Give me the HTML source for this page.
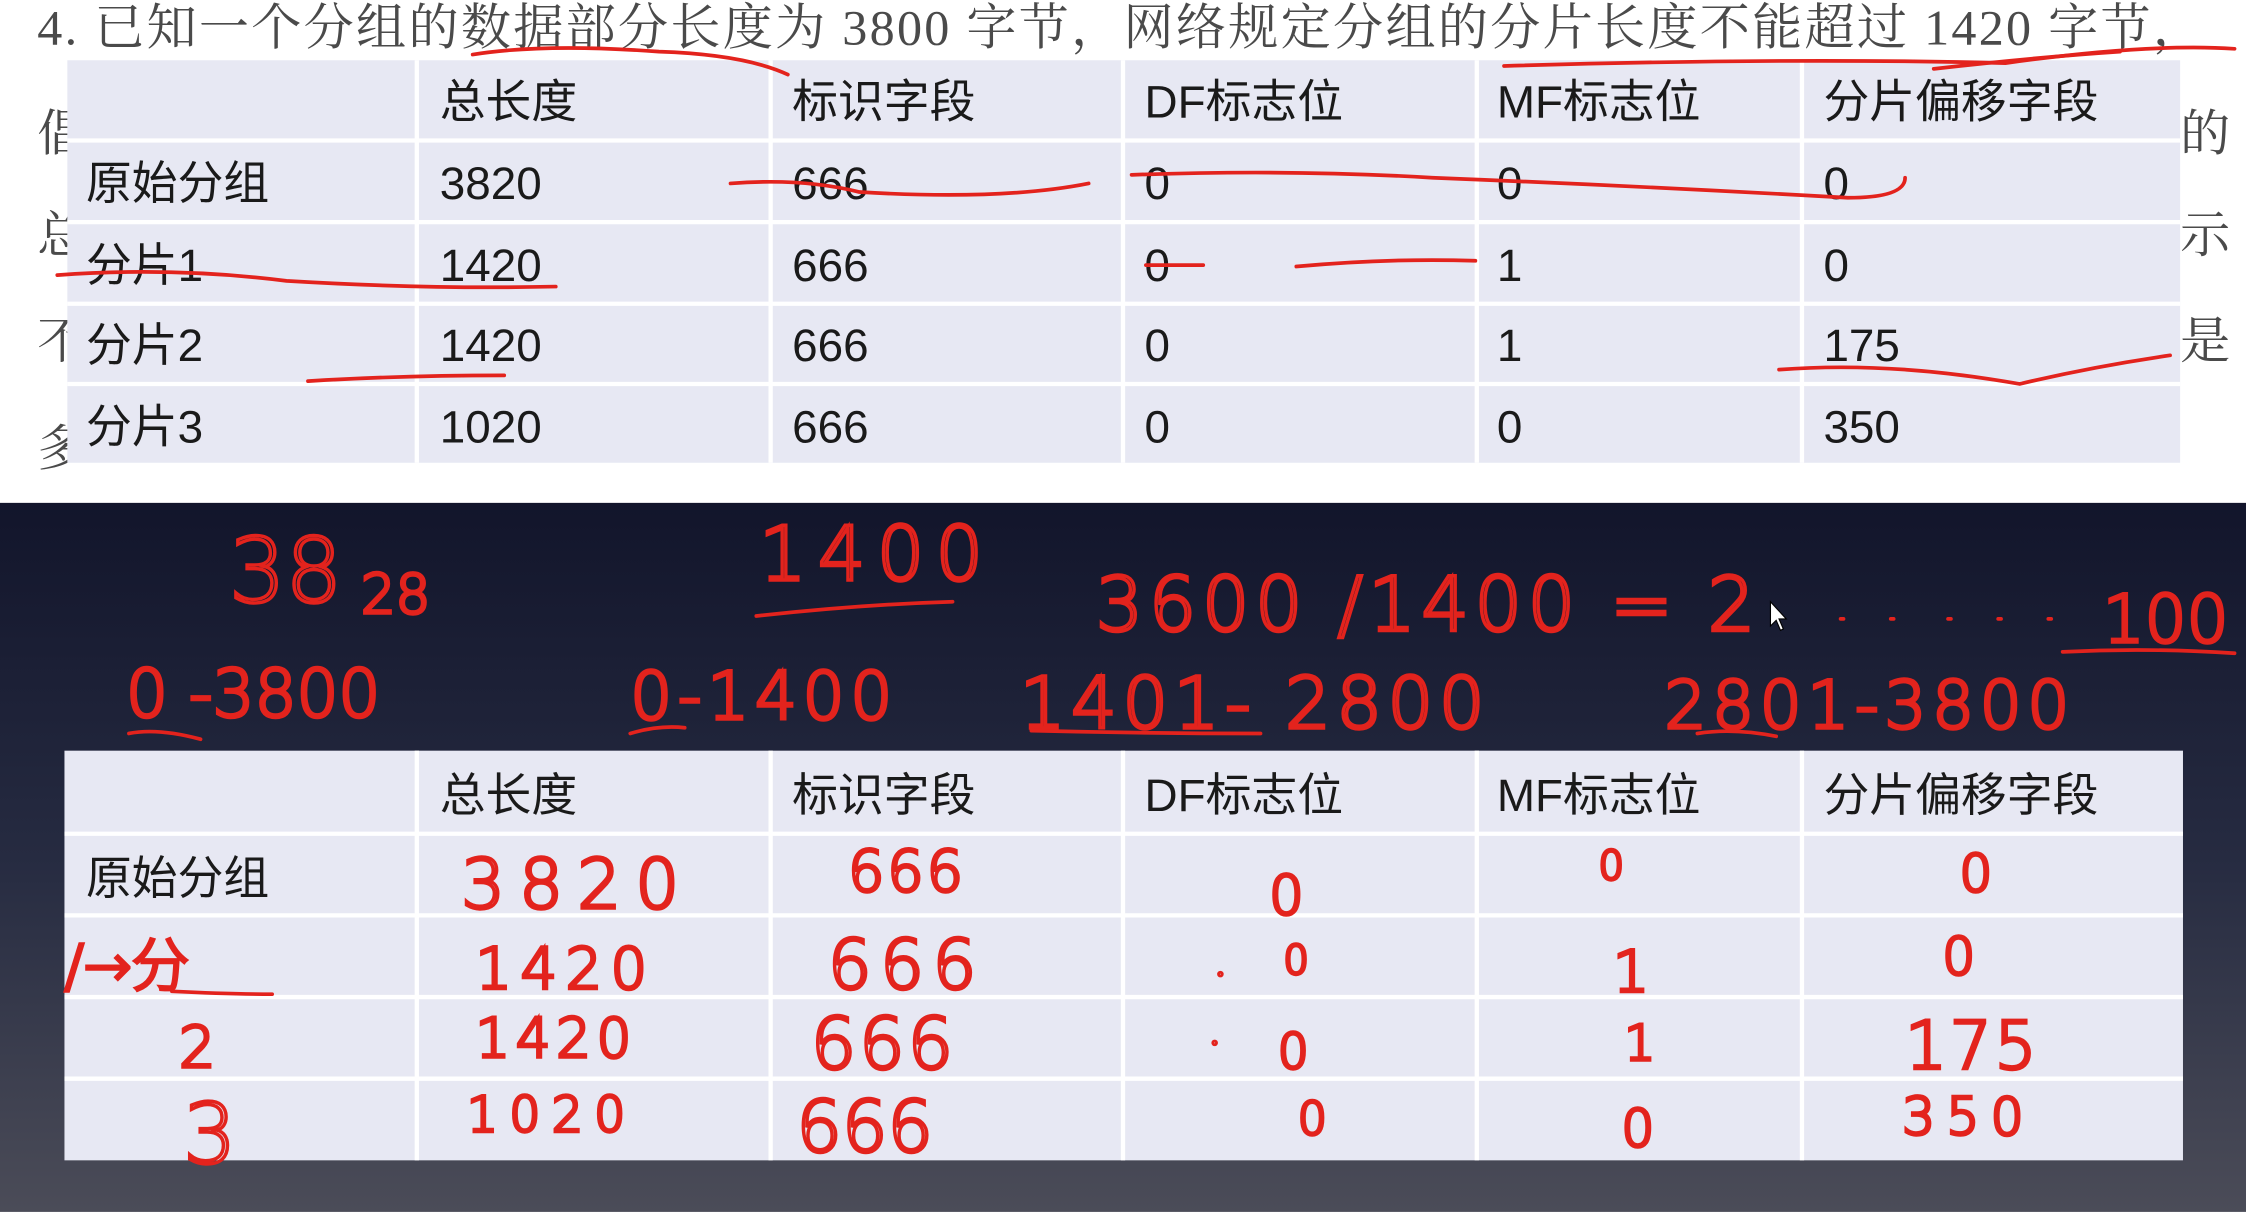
<!DOCTYPE html>
<html><head><meta charset="utf-8"><style>
html,body{margin:0;padding:0;width:2246px;height:1212px;overflow:hidden;background:#fff}
svg{display:block}
.t{font-family:"Liberation Sans","Noto Sans CJK SC",sans-serif;font-size:32px;fill:#1a1a1a}
.q{font-family:"Liberation Serif","Noto Serif CJK SC",serif;font-size:35px;fill:#4a4a4a}
.h{font-family:"DejaVu Sans","Noto Sans CJK SC",sans-serif;fill:none;stroke:#e3231d;stroke-width:2.4;font-weight:200}
.r{fill:none;stroke:#e3231d;stroke-width:2.6;stroke-linecap:round}
</style></head><body>
<svg width="2246" height="1212" viewBox="0 0 1568 846" xmlns="http://www.w3.org/2000/svg">
<defs><linearGradient id="g" x1="0" y1="0" x2="0" y2="1"><stop offset="0" stop-color="#12152b"/><stop offset="0.5" stop-color="#262b41"/><stop offset="1" stop-color="#4b4c58"/></linearGradient></defs>
<rect x="0" y="0" width="1568" height="351" fill="#fff"/>
<rect x="0" y="351" width="1568" height="495" fill="url(#g)"/>
<text class="q" x="26" y="31" textLength="1512" lengthAdjust="spacing">4. 已知一个分组的数据部分长度为 3800 字节，网络规定分组的分片长度不能超过 1420 字节，</text>
<text class="q" x="26" y="105" font-size="30">倡</text><text class="q" x="26" y="176" font-size="30">总</text><text class="q" x="26" y="250" font-size="30">不</text><text class="q" x="26" y="325" font-size="30">多</text>
<text class="q" x="1522" y="105" font-size="30">的</text><text class="q" x="1522" y="176" font-size="30">示</text><text class="q" x="1522" y="250" font-size="30">是</text>
<!-- table 1 -->
<rect x="47" y="42" width="1475" height="281" fill="#e7e8f3"/>
<g stroke="#fff" stroke-width="3">
<line x1="291" y1="42" x2="291" y2="323"/><line x1="538" y1="42" x2="538" y2="323"/><line x1="784" y1="42" x2="784" y2="323"/><line x1="1031" y1="42" x2="1031" y2="323"/><line x1="1258" y1="42" x2="1258" y2="323"/>
<line x1="47" y1="98" x2="1522" y2="98"/><line x1="47" y1="155" x2="1522" y2="155"/><line x1="47" y1="212" x2="1522" y2="212"/><line x1="47" y1="268" x2="1522" y2="268"/>
</g>
<g class="t">
<text x="307" y="82">总长度</text><text x="553" y="82">标识字段</text><text x="799" y="82">DF标志位</text><text x="1045" y="82">MF标志位</text><text x="1273" y="82">分片偏移字段</text>
<text x="60" y="139">原始分组</text><text x="307" y="139">3820</text><text x="553" y="139">666</text><text x="799" y="139">0</text><text x="1045" y="139">0</text><text x="1273" y="139">0</text>
<text x="60" y="196">分片1</text><text x="307" y="196">1420</text><text x="553" y="196">666</text><text x="799" y="196">0</text><text x="1045" y="196">1</text><text x="1273" y="196">0</text>
<text x="60" y="252">分片2</text><text x="307" y="252">1420</text><text x="553" y="252">666</text><text x="799" y="252">0</text><text x="1045" y="252">1</text><text x="1273" y="252">175</text>
<text x="60" y="309">分片3</text><text x="307" y="309">1020</text><text x="553" y="309">666</text><text x="799" y="309">0</text><text x="1045" y="309">0</text><text x="1273" y="309">350</text>
</g>
<g class="r">
<path d="M330 38 Q380 30 460 36 Q520 38 550 52"/>
<path d="M1050 46 Q1250 40 1400 44 Q1500 30 1560 34"/>
<path d="M1350 48 Q1420 40 1480 36"/>
<path d="M510 128 Q560 124 600 134 Q700 140 760 128"/>
<path d="M790 122 Q900 118 1000 124 Q1150 130 1290 138 Q1330 138 1330 124"/>
<path d="M40 192 Q120 186 200 196 Q300 202 388 200"/>
<path d="M800 185 L840 185"/><path d="M905 186 Q970 180 1030 182"/>
<path d="M215 266 Q280 262 352 262"/>
<path d="M1242 258 Q1320 252 1410 268 Q1460 256 1515 248"/>
</g>
<!-- dark handwriting -->
<g class="h">
<text x="160" y="420" font-size="62">38</text><text x="252" y="428" font-size="38">28</text>
<text x="530" y="405" font-size="52" letter-spacing="8">1400</text>
<text x="765" y="440" font-size="52" letter-spacing="4">3600 /1400 = 2</text>
<text x="1468" y="448" font-size="46">100</text>
<text x="88" y="500" font-size="46">0 -3800</text>
<text x="440" y="502" font-size="46" letter-spacing="4">0-1400</text>
<text x="712" y="508" font-size="50" letter-spacing="4">1401- 2800</text>
<text x="1162" y="508" font-size="46" letter-spacing="4">2801-3800</text>
</g>
<g class="r">
<path d="M528 430 Q600 422 665 420"/>
<path d="M1440 455 Q1500 452 1560 456"/>
<path d="M90 512 Q110 508 140 516"/><path d="M440 512 Q460 506 478 508"/>
<path d="M720 510 Q800 512 880 512"/><path d="M1185 512 Q1210 508 1240 514"/>
<path d="M1285 432 h2 M1320 432 h2 M1360 432 h2 M1395 432 h2 M1430 432 h2"/>
</g>
<path d="M1236 420 l0 17 l4 -4 l3 7 l2 -1 l-3 -7 l5 0 z" fill="#fff" stroke="#000" stroke-width="0.8"/>
<!-- table 2 -->
<rect x="45" y="524" width="1479" height="286" fill="#e7e8f3"/>
<g stroke="#fff" stroke-width="3">
<line x1="291" y1="524" x2="291" y2="810"/><line x1="538" y1="524" x2="538" y2="810"/><line x1="784" y1="524" x2="784" y2="810"/><line x1="1031" y1="524" x2="1031" y2="810"/><line x1="1258" y1="524" x2="1258" y2="810"/>
<line x1="45" y1="582" x2="1524" y2="582"/><line x1="45" y1="639" x2="1524" y2="639"/><line x1="45" y1="696" x2="1524" y2="696"/><line x1="45" y1="753" x2="1524" y2="753"/>
</g>
<g class="t">
<text x="307" y="566">总长度</text><text x="553" y="566">标识字段</text><text x="799" y="566">DF标志位</text><text x="1045" y="566">MF标志位</text><text x="1273" y="566">分片偏移字段</text>
<text x="60" y="624">原始分组</text>
</g>
<g class="h">
<text x="322" y="634" font-size="48" letter-spacing="10">3820</text>
<text x="592" y="622" font-size="40" letter-spacing="2">666</text>
<text x="886" y="638" font-size="38">0</text><text x="1116" y="614" font-size="28">0</text><text x="1368" y="622" font-size="36">0</text>
<text x="45" y="688" font-size="40">/→分</text>
<text x="332" y="690" font-size="40" letter-spacing="6">1420</text>
<text x="578" y="690" font-size="48" letter-spacing="6">666</text>
<text x="896" y="680" font-size="28">0</text><text x="1126" y="692" font-size="40">1</text><text x="1356" y="680" font-size="36">0</text>
<text x="125" y="745" font-size="40">2</text>
<text x="332" y="738" font-size="38" letter-spacing="4">1420</text>
<text x="566" y="746" font-size="50" letter-spacing="2">666</text>
<text x="892" y="746" font-size="34">0</text><text x="1134" y="740" font-size="34">1</text>
<text x="1330" y="746" font-size="46" letter-spacing="2">175</text>
<text x="128" y="812" font-size="58">3</text>
<text x="326" y="790" font-size="34" letter-spacing="8">1020</text>
<text x="556" y="804" font-size="50">666</text>
<text x="906" y="792" font-size="32">0</text><text x="1132" y="800" font-size="36">0</text>
<text x="1328" y="792" font-size="36" letter-spacing="8">350</text>
</g>
<g class="r"><path d="M120 692 Q160 694 190 694"/><circle cx="852" cy="680" r="1"/><circle cx="848" cy="728" r="1"/></g>
</svg>
</body></html>
